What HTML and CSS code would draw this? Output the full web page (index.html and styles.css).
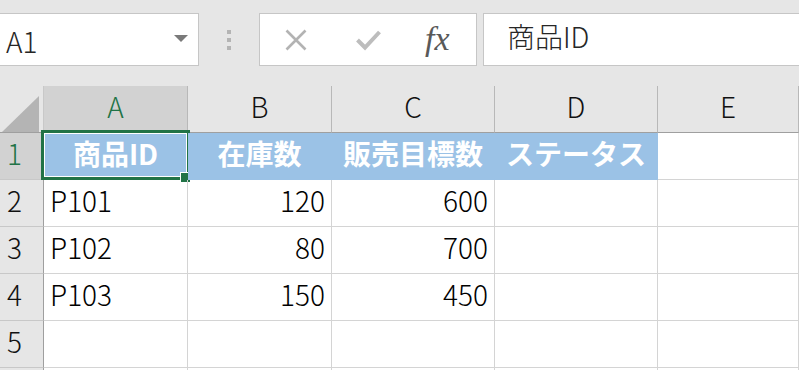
FILE: index.html
```html
<!DOCTYPE html>
<html lang="ja">
<head>
<meta charset="utf-8">
<title>Sheet</title>
<link rel="stylesheet" href="styles.css">
</head>
<body>
<div class="app">
  <div class="toolbar">
    <div class="namebox">
      <span class="ref">A1</span>
      <span class="drop"></span>
    </div>
    <div class="grip"><i></i><i></i><i></i></div>
    <div class="fbuttons">
      <svg class="ico-x" width="22" height="22" viewBox="0 0 22 22"><path d="M1.5 1.5 L20.5 20.5 M20.5 1.5 L1.5 20.5" stroke="#b3b3b3" stroke-width="2.6" fill="none"/></svg>
      <svg class="ico-ok" width="25" height="21" viewBox="0 0 25 21"><path d="M1.5 10 L9 17.5 L23.5 2" stroke="#bdbdbd" stroke-width="4" fill="none"/></svg>
      <span class="fx">fx</span>
    </div>
    <div class="fbar">商品ID</div>
  </div>
  <div class="sheet">
    <div class="c corner"><svg width="40" height="40" viewBox="0 0 40 40"><polygon points="39,4 39,41 1,41" fill="#b4b4b4"/></svg></div>
    <div class="c ch sel">A</div>
    <div class="c ch">B</div>
    <div class="c ch">C</div>
    <div class="c ch">D</div>
    <div class="c ch">E</div>

    <div class="c rh sel">1</div>
    <div class="c hd active">商品ID<span class="selbox"><span class="handle"></span></span></div>
    <div class="c hd">在庫数</div>
    <div class="c hd">販売目標数</div>
    <div class="c hd">ステータス</div>
    <div class="c"></div>

    <div class="c rh">2</div>
    <div class="c">P101</div>
    <div class="c num">120</div>
    <div class="c num">600</div>
    <div class="c"></div>
    <div class="c"></div>

    <div class="c rh">3</div>
    <div class="c">P102</div>
    <div class="c num">80</div>
    <div class="c num">700</div>
    <div class="c"></div>
    <div class="c"></div>

    <div class="c rh">4</div>
    <div class="c">P103</div>
    <div class="c num">150</div>
    <div class="c num">450</div>
    <div class="c"></div>
    <div class="c"></div>

    <div class="c rh">5</div>
    <div class="c"></div>
    <div class="c"></div>
    <div class="c"></div>
    <div class="c"></div>
    <div class="c"></div>

    <div class="c rh"></div>
    <div class="c"></div>
    <div class="c"></div>
    <div class="c"></div>
    <div class="c"></div>
    <div class="c"></div>
  </div>
</div>
</body>
</html>
```

FILE: styles.css
```css
html, body {
  margin: 0;
  padding: 0;
  background: #ffffff;
  overflow: hidden;
}
body {
  width: 799px;
  height: 370px;
  font-family: "Noto Sans CJK JP", "Noto Sans", sans-serif;
  font-weight: 300;
}
.app {
  width: 799px;
  height: 370px;
  overflow: hidden;
}
.toolbar {
  height: 86px;
  box-sizing: border-box;
  background: #e6e6e6;
  display: flex;
  align-items: flex-start;
  padding-top: 13px;
}
.namebox {
  width: 200px;
  height: 53px;
  margin-left: -1px;
  box-sizing: border-box;
  border: 1px solid #c6c6c6;
  background: #ffffff;
  display: flex;
  align-items: center;
  justify-content: space-between;
  padding: 2px 10px 0 6px;
  font-size: 28px;
  color: #262626;
  line-height: 1;
}
.drop {
  width: 0;
  height: 0;
  border-left: 7px solid transparent;
  border-right: 7px solid transparent;
  border-top: 7px solid #7a7a7a;
  margin-top: -5px;
}
.grip {
  width: 60px;
  height: 53px;
  display: flex;
  flex-direction: column;
  align-items: center;
  justify-content: center;
  gap: 4px;
}
.grip i {
  display: block;
  width: 4px;
  height: 4px;
  background: #b4b4b4;
}
.fbuttons {
  width: 218px;
  height: 53px;
  box-sizing: border-box;
  border: 1px solid #c6c6c6;
  background: #ffffff;
  display: flex;
  align-items: center;
  padding-left: 25px;
}
.ico-x { margin-top: 1px; }
.ico-ok { margin-left: 49px; margin-top: 1px; }
.fx {
  margin-left: 44px;
  font-family: "Liberation Serif", "DejaVu Serif", serif;
  font-style: italic;
  font-weight: 400;
  font-size: 34px;
  color: #595959;
  line-height: 1;
  margin-top: -2px;
}
.fbar {
  flex: 1;
  height: 53px;
  margin-left: 6px;
  margin-right: -1px;
  box-sizing: border-box;
  border: 1px solid #c6c6c6;
  background: #ffffff;
  display: flex;
  align-items: center;
  padding: 0 0 7px 23px;
  font-size: 28px;
  color: #262626;
  line-height: 1;
}
.sheet {
  display: grid;
  grid-template-columns: 44px 144px 144px 163px 163px 1fr;
  grid-auto-rows: 47px;
}
.c {
  box-sizing: border-box;
  border-right: 1px solid #d4d4d4;
  border-bottom: 1px solid #d4d4d4;
  font-size: 28px;
  line-height: 1;
  display: flex;
  align-items: center;
  padding: 0 6px 6px 6px;
  white-space: nowrap;
  color: #000000;
  position: relative;
}
.num { justify-content: flex-end; }
.corner {
  background: #e6e6e6;
  border-right-color: #c8c8c8;
  border-bottom-color: #9f9f9f;
  padding: 0;
  align-items: flex-end;
}
.ch {
  background: #e6e6e6;
  justify-content: center;
  border-right-color: #b8b8b8;
  border-bottom-color: #9f9f9f;
  color: #111111;
}
.rh {
  background: #e6e6e6;
  border-right-color: #9f9f9f;
  border-bottom-color: #c8c8c8;
  padding-left: 7px;
  color: #111111;
}
.sel {
  background: #d2d2d2;
  color: #217346;
}
.hd {
  background: #9bc2e6;
  color: #ffffff;
  font-weight: 700;
  justify-content: center;
  border-right-color: #9bc2e6;
  border-bottom-color: #9bc2e6;
}
.selbox {
  position: absolute;
  left: -3px;
  top: -3px;
  right: -3px;
  bottom: -1px;
  border: 3px solid #217346;
  box-shadow: inset 0 0 0 1px #ffffff;
  pointer-events: none;
}
.handle {
  position: absolute;
  right: -3px;
  bottom: -5px;
  width: 9px;
  height: 9px;
  background: #217346;
  border-left: 1px solid #ffffff;
  border-top: 1px solid #ffffff;
}
```
